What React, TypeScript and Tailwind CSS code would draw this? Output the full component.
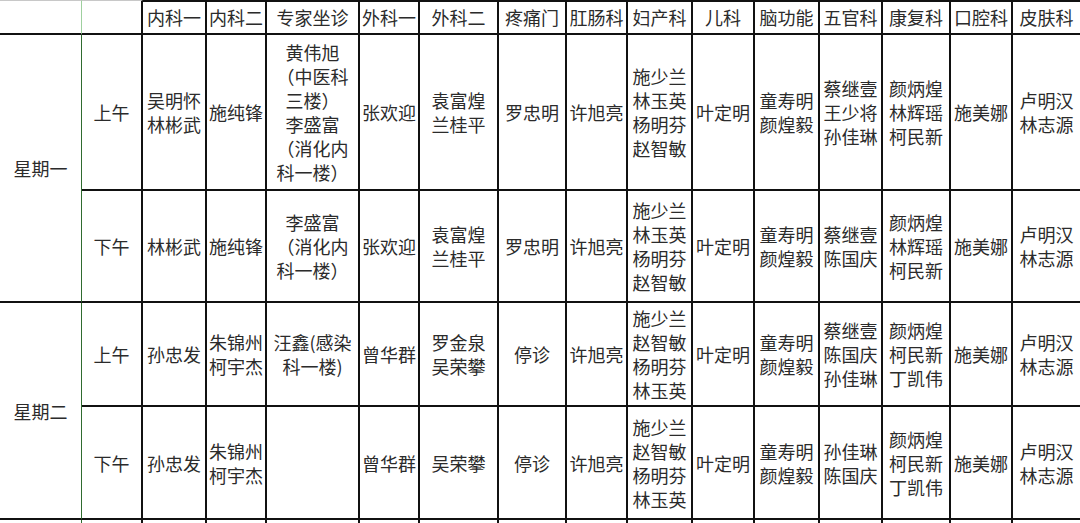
import type { ReactNode } from 'react';

type Lines = string[];

const headers: Lines[] = [
    ['内科一'],
    ['内科二'],
    ['专家坐诊'],
    ['外科一'],
    ['外科二'],
    ['疼痛门', '诊'],
    ['肛肠科'],
    ['妇产科'],
    ['儿科'],
    ['脑功能', '科'],
    ['五官科'],
    ['康复科'],
    ['口腔科'],
    ['皮肤科'],
];

const schedule: { day: string; slots: { period: string; cells: Lines[] }[] }[] = [
    {
        day: '星期一',
        slots: [
            {
                period: '上午',
                cells: [
                    ['吴明怀', '林彬武'],
                    ['施纯锋'],
                    ['黄伟旭', '（中医科', '三楼）', '李盛富', '（消化内', '科一楼）'],
                    ['张欢迎'],
                    ['袁富煌', '兰桂平'],
                    ['罗忠明'],
                    ['许旭亮'],
                    ['施少兰', '林玉英', '杨明芬', '赵智敏'],
                    ['叶定明'],
                    ['童寿明', '颜煌毅'],
                    ['蔡继壹', '王少将', '孙佳琳'],
                    ['颜炳煌', '林辉瑶', '柯民新'],
                    ['施美娜'],
                    ['卢明汉', '林志源'],
                ],
            },
            {
                period: '下午',
                cells: [
                    ['林彬武'],
                    ['施纯锋'],
                    ['李盛富', '（消化内', '科一楼）'],
                    ['张欢迎'],
                    ['袁富煌', '兰桂平'],
                    ['罗忠明'],
                    ['许旭亮'],
                    ['施少兰', '林玉英', '杨明芬', '赵智敏'],
                    ['叶定明'],
                    ['童寿明', '颜煌毅'],
                    ['蔡继壹', '陈国庆'],
                    ['颜炳煌', '林辉瑶', '柯民新'],
                    ['施美娜'],
                    ['卢明汉', '林志源'],
                ],
            },
        ],
    },
    {
        day: '星期二',
        slots: [
            {
                period: '上午',
                cells: [
                    ['孙忠发'],
                    ['朱锦州', '柯宇杰'],
                    ['汪鑫(感染', '科一楼)'],
                    ['曾华群'],
                    ['罗金泉', '吴荣攀'],
                    ['停诊'],
                    ['许旭亮'],
                    ['施少兰', '赵智敏', '杨明芬', '林玉英'],
                    ['叶定明'],
                    ['童寿明', '颜煌毅'],
                    ['蔡继壹', '陈国庆', '孙佳琳'],
                    ['颜炳煌', '柯民新', '丁凯伟'],
                    ['施美娜'],
                    ['卢明汉', '林志源'],
                ],
            },
            {
                period: '下午',
                cells: [
                    ['孙忠发'],
                    ['朱锦州', '柯宇杰'],
                    [],
                    ['曾华群'],
                    ['吴荣攀'],
                    ['停诊'],
                    ['许旭亮'],
                    ['施少兰', '赵智敏', '杨明芬', '林玉英'],
                    ['叶定明'],
                    ['童寿明', '颜煌毅'],
                    ['孙佳琳', '陈国庆'],
                    ['颜炳煌', '柯民新', '丁凯伟'],
                    ['施美娜'],
                    ['卢明汉', '林志源'],
                ],
            },
        ],
    },
];

const Cell = ({ lines, className = '' }: { lines: Lines; className?: string }) => (
    <div
        className={`flex flex-col items-center justify-center overflow-hidden border-r-2 border-b-2 border-[#111] text-center ${className}`}
    >
        {lines.map((l, i) => (
            <span key={i} className="block whitespace-nowrap">
                {l}
            </span>
        ))}
    </div>
);

const Blank = ({ children, className = '' }: { children?: ReactNode; className?: string }) => (
    <div className={`border-b-2 border-[#111] ${className}`}>{children}</div>
);

export default function App() {
    return (
        <div className="h-[523px] w-[1080px] overflow-hidden bg-white">
            <div
                className="grid grid-cols-[82px_61px_64px_60px_93px_60px_79px_68px_61px_65px_62px_65px_63px_68px_62px_69px] grid-rows-[35px_156px_112px_104px_113px_40px] text-[18px] leading-[24px] text-[#2b2b2b]"
                style={{ fontFamily: '"Noto Sans CJK SC", "Noto Sans", sans-serif' }}
            >
                {/* header row */}
                <Blank className="border-t border-t-[#c8c8c8] border-r border-r-[#9fd09f]" />
                <Blank className="border-t border-t-[#c8c8c8] border-r-2 border-r-[#111]" />
                {headers.map((h, i) => (
                    <Cell key={i} lines={h} className="justify-start border-t-2 pt-[3px]" />
                ))}

                {/* schedule body */}
                {schedule.map((d) => (
                    <div key={d.day} className="contents">
                        <div className="row-span-2 flex items-center justify-center border-r border-b-2 border-r-[#2f6b2f] border-b-[#111]">
                            {d.day}
                        </div>
                        {d.slots.map((s) => (
                            <div key={s.period} className="contents">
                                <Cell lines={[s.period]} />
                                {s.cells.map((c, i) => (
                                    <Cell key={i} lines={c} />
                                ))}
                            </div>
                        ))}
                    </div>
                ))}

                {/* next row, cut off by the window */}
                <div className="border-r border-r-[#2f6b2f]" />
                {Array.from({ length: 15 }).map((_, i) => (
                    <div key={i} className="border-r-2 border-[#111]" />
                ))}
            </div>
        </div>
    );
}
